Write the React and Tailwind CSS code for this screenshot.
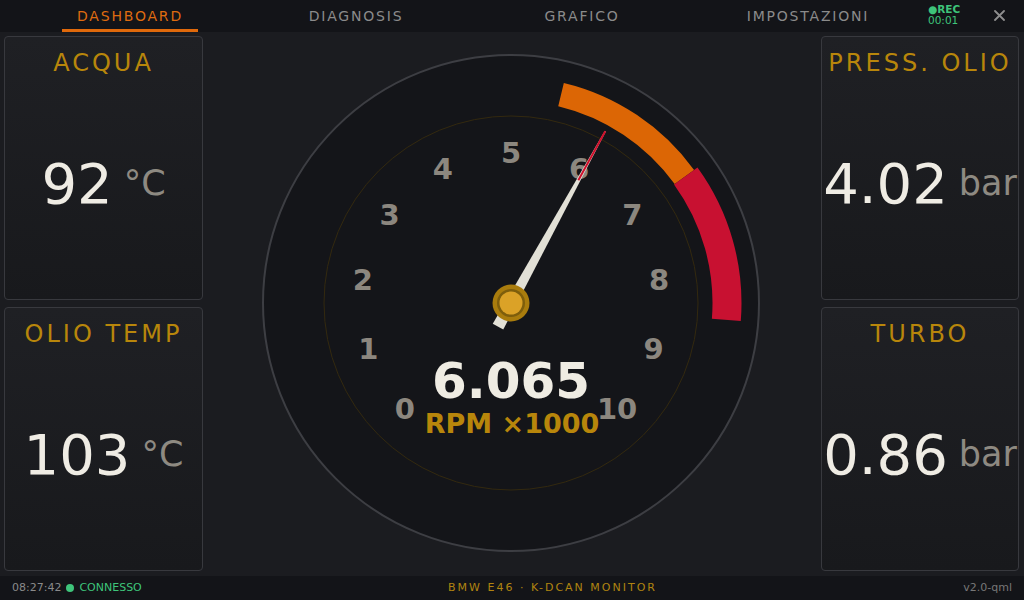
import React from 'react';

const tabs = ['DASHBOARD', 'DIAGNOSIS', 'GRAFICO', 'IMPOSTAZIONI'];

// gauge geometry: 0..10 over 270 degrees, measured clockwise from 12 o'clock
const toAngle = (v) => -135 + v * 27;
const polar = (r, deg) => {
    const a = (deg * Math.PI) / 180;
    return [r * Math.sin(a), -r * Math.cos(a)];
};
const arcPath = (r, a0, a1) => {
    const [x0, y0] = polar(r, a0);
    const [x1, y1] = polar(r, a1);
    const large = a1 - a0 > 180 ? 1 : 0;
    return `M ${x0} ${y0} A ${r} ${r} 0 ${large} 1 ${x1} ${y1}`;
};

const RpmGauge = ({ rpm }) => {
    const needle = toAngle(rpm);
    return (
        <svg width="500" height="500" viewBox="-250 -250 500 500" className="block">
            <circle cx="0" cy="0" r="248" fill="#141519" stroke="#3d3e43" strokeWidth="2" />
            <circle cx="0" cy="0" r="187" fill="none" stroke="#33290f" strokeWidth="1" />

            {/* warning + redline bands */}
            <path d={arcPath(214.3, toAngle(5.5), toAngle(7))} fill="none" stroke="#dc6605" strokeWidth="24" />
            <path d={arcPath(216, toAngle(7), toAngle(8.5))} fill="none" stroke="#c81131" strokeWidth="29" />

            {Array.from({ length: 11 }, (_, i) => {
                const [x, y] = polar(150, toAngle(i));
                return (
                    <text
                        key={i}
                        x={x}
                        y={y}
                        textAnchor="middle"
                        dominantBaseline="central"
                        fill="#8c877f"
                        fontFamily="DejaVu Sans, sans-serif"
                        fontWeight="700"
                        fontSize="29"
                    >
                        {i}
                    </text>
                );
            })}

            <text x="0" y="95" textAnchor="middle" fill="#efece3" fontFamily="DejaVu Sans, sans-serif" fontWeight="700" fontSize="50">
                {rpm.toFixed(3)}
            </text>
            <text x="1" y="130" textAnchor="middle" fill="#b8860b" fontFamily="DejaVu Sans, sans-serif" fontWeight="700" fontSize="27">
                RPM ×1000
            </text>

            <g transform={`rotate(${needle})`}>
                <polygon points="-6,27 6,27 0.6,-196 -0.6,-196" fill="#e2e0d6" />
                <line x1="0" y1="-140" x2="0" y2="-196" stroke="#d0102c" strokeWidth="2" />
            </g>

            <circle cx="0" cy="0" r="18.5" fill="#a97c0d" />
            <circle cx="0" cy="0" r="14" fill="#7e5e0c" />
            <circle cx="0" cy="0" r="11.5" fill="#dba227" />
        </svg>
    );
};

const ValueCard = ({ title, value, unit }) => (
    <div className="flex-1 flex flex-col rounded-[4px] border border-[#38393e] bg-gradient-to-b from-[#1f2024] to-[#18191c] pb-[9px]">
        <div className="pt-[12px] text-center text-[24px] leading-[28px] tracking-[3px] text-[#b8860b] whitespace-nowrap">
            {title}
        </div>
        <div className="flex-1 flex items-center justify-center gap-[11px] whitespace-nowrap">
            <span className="text-[56px] leading-none text-[#efece4]">{value}</span>
            <span className="text-[35px] leading-none text-[#8e8a82]">{unit}</span>
        </div>
    </div>
);

const App = () => {
    return (
        <div className="w-[1024px] h-[600px] flex flex-col bg-[#1b1c20] font-['DejaVu_Sans',sans-serif] overflow-hidden">
            {/* top navigation */}
            <div className="h-[32px] flex items-stretch bg-[#131418] pl-[17px]">
                {tabs.map((t, i) => (
                    <div key={t} className="w-[226px] flex justify-center">
                        <span
                            className={
                                i === 0
                                    ? 'flex items-center px-[15px] border-y-[3px] border-t-transparent border-b-[#e0690b] text-[14px] tracking-[1.8px] text-[#df6b10]'
                                    : 'flex items-center px-[15px] border-y-[3px] border-transparent text-[14px] tracking-[1.8px] text-[#8b8b8b]'
                            }
                        >
                            {t}
                        </span>
                    </div>
                ))}
                <div className="ml-[7px] w-[46px] flex flex-col justify-center mb-[3px] text-[#3ec47a]">
                    <span className="text-[10.5px] leading-[11px] font-bold">●REC</span>
                    <span className="text-[10.5px] leading-[11px]">00:01</span>
                </div>
                <div className="flex-1 flex items-center justify-center pb-[1px]">
                    <svg width="11" height="11" viewBox="0 0 11 11">
                        <path d="M1 1 L10 10 M10 1 L1 10" stroke="#8e8e8e" strokeWidth="1.8" strokeLinecap="round" />
                    </svg>
                </div>
            </div>

            {/* main dashboard */}
            <div className="flex-1 flex min-h-0">
                <div className="w-[203px] pl-[4px] pt-[4px] pb-[5px] flex flex-col gap-[7px]">
                    <ValueCard title="ACQUA" value="92" unit="°C" />
                    <ValueCard title="OLIO TEMP" value="103" unit="°C" />
                </div>
                <div className="flex-1 flex items-center justify-center pb-[2px] pr-[2px]">
                    <RpmGauge rpm={6.065} />
                </div>
                <div className="w-[203px] pr-[5px] pt-[4px] pb-[5px] flex flex-col gap-[7px]">
                    <ValueCard title="PRESS. OLIO" value="4.02" unit="bar" />
                    <ValueCard title="TURBO" value="0.86" unit="bar" />
                </div>
            </div>

            {/* status bar */}
            <div className="h-[24px] flex items-center justify-between px-[12px] bg-[#131418] text-[11px]">
                <div className="flex items-center gap-[5px]">
                    <span className="text-[#8a8a8a]">08:27:42</span>
                    <span className="w-[8px] h-[8px] rounded-full bg-[#3ec47a]" />
                    <span className="text-[#3ec47a]">CONNESSO</span>
                </div>
                <span className="tracking-[2px] text-[#b08410]">BMW E46 · K-DCAN MONITOR</span>
                <span className="text-[#777777]">v2.0-qml</span>
            </div>
        </div>
    );
};

export default App;
